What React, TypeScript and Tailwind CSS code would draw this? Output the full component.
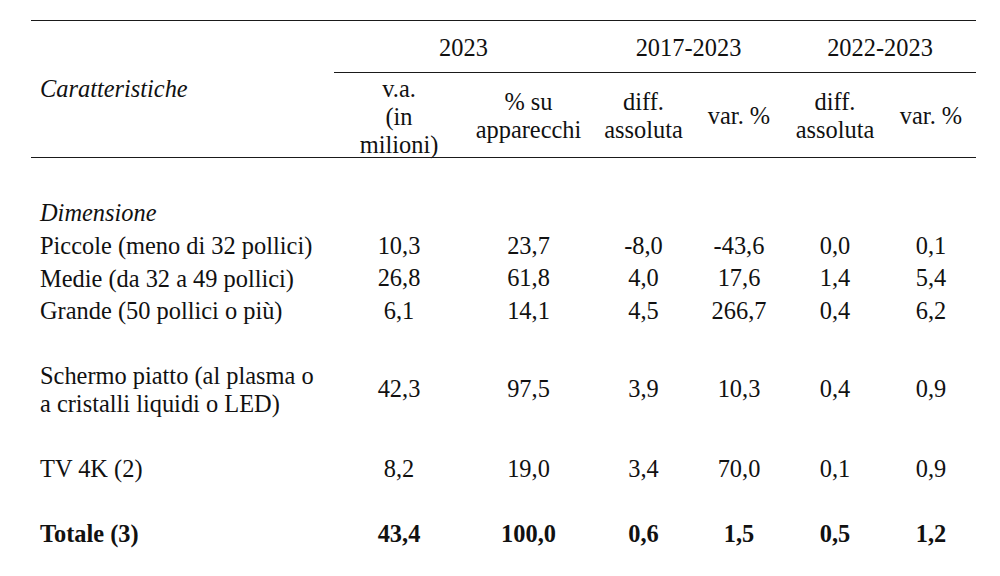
import React from "react";

const GRID = "grid grid-cols-[303px_130px_129px_101px_90px_102px_90px]";

type RowProps = {
  label: React.ReactNode;
  values?: string[];
  cls: string;
  bold?: boolean;
  italic?: boolean;
};

function Row({ label, values, cls, bold, italic }: RowProps) {
  return (
    <div className={`${GRID} ${cls} ${bold ? "font-bold" : ""}`}>
      <div className={`flex items-center pl-[9px] ${italic ? "italic" : ""}`}>
        <div>{label}</div>
      </div>
      {(values ?? []).map((v, i) => (
        <div key={i} className="flex items-center justify-center pb-[1px]">
          <div>{v}</div>
        </div>
      ))}
    </div>
  );
}

export default function App() {
  return (
    <div className="w-[1000px] h-[576px] bg-white overflow-hidden text-[#111] text-[24.4px] leading-[28px] font-['Liberation_Serif','Times_New_Roman',serif]">
      <div className="ml-[31px] pt-[20px] w-[945px]">
        {/* Header */}
        <div className={`${GRID} grid-rows-[51.5px_84.5px] border-t-[1.5px] border-b-[1.5px] border-[#1a1a1a]`}>
          <div className="row-span-2 flex items-center pl-[9px] italic">
            <div>Caratteristiche</div>
          </div>
          <div className="col-span-2 border-b border-[#1a1a1a] pt-[13px] text-center">2023</div>
          <div className="col-span-2 border-b border-[#1a1a1a] pt-[13px] text-center">2017-2023</div>
          <div className="col-span-2 border-b border-[#1a1a1a] pt-[13px] text-center">2022-2023</div>

          <div className="pt-[2.5px] text-center">
            v.a.
            <br />
            (in
            <br />
            milioni)
          </div>
          <div className="pt-[2.5px] flex items-center justify-center text-center">
            <div>
              % su
              <br />
              apparecchi
            </div>
          </div>
          <div className="pt-[2.5px] flex items-center justify-center text-center">
            <div>
              diff.
              <br />
              assoluta
            </div>
          </div>
          <div className="pt-[2.5px] flex items-center justify-center text-center">
            <div>var. %</div>
          </div>
          <div className="pt-[2.5px] flex items-center justify-center text-center">
            <div>
              diff.
              <br />
              assoluta
            </div>
          </div>
          <div className="pt-[2.5px] flex items-center justify-center text-center">
            <div>var. %</div>
          </div>
        </div>

        {/* Body */}
        <Row label="Dimensione" italic cls="mt-[37.8px] h-[34px]" />
        <Row
          label="Piccole (meno di 32 pollici)"
          values={["10,3", "23,7", "-8,0", "-43,6", "0,0", "0,1"]}
          cls="h-[32.5px]"
        />
        <Row
          label="Medie (da 32 a 49 pollici)"
          values={["26,8", "61,8", "4,0", "17,6", "1,4", "5,4"]}
          cls="h-[32.5px]"
        />
        <Row
          label="Grande (50 pollici o più)"
          values={["6,1", "14,1", "4,5", "266,7", "0,4", "6,2"]}
          cls="h-[32.5px]"
        />
        <Row
          label={
            <>
              Schermo piatto (al plasma o
              <br />a cristalli liquidi o LED)
            </>
          }
          values={["42,3", "97,5", "3,9", "10,3", "0,4", "0,9"]}
          cls="mt-[32.5px] h-[60px]"
        />
        <Row
          label="TV 4K (2)"
          values={["8,2", "19,0", "3,4", "70,0", "0,1", "0,9"]}
          cls="mt-[33px] h-[32.5px]"
        />
        <Row
          label="Totale (3)"
          values={["43,4", "100,0", "0,6", "1,5", "0,5", "1,2"]}
          cls="mt-[32.8px] h-[32.5px]"
          bold
        />
      </div>
    </div>
  );
}
